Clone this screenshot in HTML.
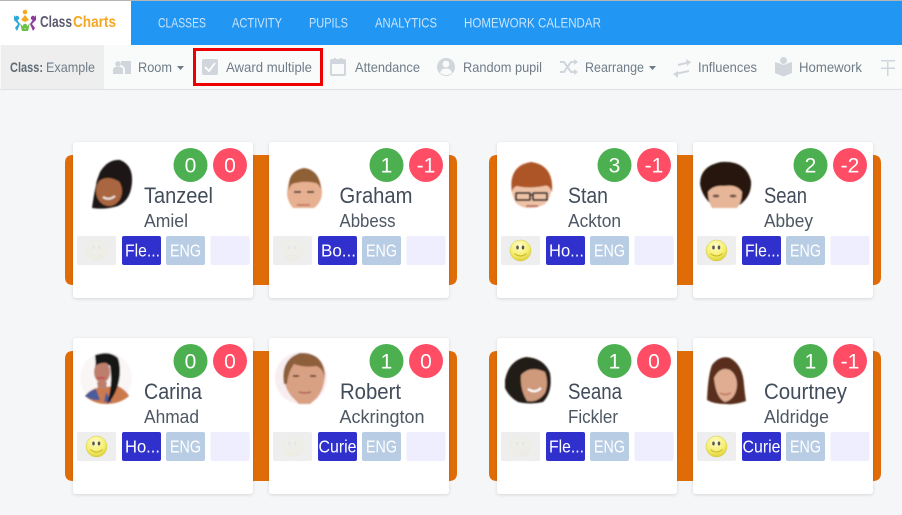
<!DOCTYPE html>
<html lang="en"><head><meta charset="utf-8"><title>Class Charts</title>
<style>
html,body{margin:0;padding:0;width:902px;height:515px;overflow:hidden;background:#f4f6f8}
svg{display:block}
text{font-family:"Liberation Sans",sans-serif}
.nav{font-size:14px;fill:#c9e4fb}
.tb{font-size:14px;fill:#6f7c87}
.nm{font-size:22.500px;fill:#424c5a}
.sn{font-size:18px;fill:#4d5763}
.bd{font-size:21px;fill:#fff;text-anchor:middle}
.ch{font-size:17.500px;fill:#fff}
.ic{fill:#d0d6db}
.ics{fill:none;stroke:#d0d6db;stroke-width:2}
</style></head><body>
<svg width="902" height="515" viewBox="0 0 902 515" xmlns="http://www.w3.org/2000/svg">
<defs>
<filter id="b" x="-10%" y="-10%" width="120%" height="120%"><feGaussianBlur stdDeviation=".9"/></filter>
<filter id="s" x="-10%" y="-10%" width="120%" height="120%"><feDropShadow dx="0" dy="1" stdDeviation="1.500" flood-color="#000" flood-opacity=".13"/></filter>
<radialGradient id="sm" cx=".45" cy=".3" r=".75"><stop offset="0" stop-color="#fffdd0"/><stop offset=".6" stop-color="#f6ee6c"/><stop offset="1" stop-color="#d8c92c"/></radialGradient>
<g id="smile"><circle cx="0" cy="0" r="10.500" fill="url(#sm)" stroke="#cfc85a" stroke-width=".5"/><ellipse cx="-3" cy="-3" rx="1.300" ry="2" fill="#555"/><ellipse cx="2.500" cy="-3" rx="1.300" ry="2" fill="#555"/><path d="M-6 3Q0 8 6 3" fill="none" stroke="#c5b52a" stroke-width="1"/></g>
<g id="base">
<rect width="180" height="156" rx="3" fill="#fff" filter="url(#s)"/>
<circle cx="117.500" cy="23" r="17" fill="#4caf50"/>
<circle cx="157" cy="23" r="17" fill="#ff4d65"/>
<rect x="4" y="94" width="39" height="29" rx="2" fill="#eeeeee"/>
<rect x="49" y="94" width="39" height="29" rx="2" fill="#3030cc"/>
<rect x="93" y="94" width="39" height="29" rx="2" fill="#b8cce4"/>
<rect x="137.500" y="94" width="39" height="29" rx="2" fill="#eeeeff"/>
<text class="ch" x="97" y="114.500" textLength="31" lengthAdjust="spacingAndGlyphs">ENG</text>
</g>
</defs>

<rect width="902" height="515" fill="#f4f6f8"/>
<!-- header -->
<rect width="902" height="45" fill="#fff"/>
<rect y="0" width="902" height="1" fill="#b5b5b5"/>
<rect x="131" y="1" width="771" height="44" fill="#2196f3"/>
<g>
<circle cx="25" cy="12" r="2.300" fill="#f5a623"/><path d="M25 15L21 20L25 22L29 20Z" fill="#f5a623"/>
<circle cx="17" cy="18" r="2.200" fill="#2fa8d8"/><path d="M14 15L20 24L17 31L15 28L18 24L14 20Z" fill="#2fa8d8"/>
<circle cx="33" cy="18" r="2.200" fill="#8d3c9e"/><path d="M36 15L30 24L33 31L35 28L32 24L36 20Z" fill="#8d3c9e"/>
<circle cx="25" cy="26" r="2.200" fill="#6cc04a"/><path d="M20 23L25 29L30 23L28 31H22Z" fill="#6cc04a"/>
</g>
<text x="40" y="27" font-size="16" font-weight="bold" fill="#5c5a6e" textLength="32" lengthAdjust="spacingAndGlyphs">Class</text>
<text x="73" y="27" font-size="16" font-weight="bold" fill="#f5a623" textLength="43" lengthAdjust="spacingAndGlyphs">Charts</text>
<text class="nav" x="158" y="27.500" textLength="48" lengthAdjust="spacingAndGlyphs">CLASSES</text>
<text class="nav" x="232" y="27.500" textLength="50" lengthAdjust="spacingAndGlyphs">ACTIVITY</text>
<text class="nav" x="309" y="27.500" textLength="39" lengthAdjust="spacingAndGlyphs">PUPILS</text>
<text class="nav" x="375" y="27.500" textLength="62" lengthAdjust="spacingAndGlyphs">ANALYTICS</text>
<text class="nav" x="464" y="27.500" textLength="137" lengthAdjust="spacingAndGlyphs">HOMEWORK CALENDAR</text>

<!-- toolbar -->
<rect y="45" width="902" height="44" fill="#f9fbfb"/>
<rect y="89" width="902" height="1" fill="#dfe2e5"/>
<rect x="1" y="45" width="103" height="44" fill="#eeeeee"/>
<text class="tb" x="10" y="72" font-weight="bold" style="fill:#5f6b75" textLength="33" lengthAdjust="spacingAndGlyphs">Class:</text>
<text class="tb" x="46" y="72" textLength="49" lengthAdjust="spacingAndGlyphs">Example</text>
<!-- room -->
<path class="ic" d="M113 74V70Q113 67 116 67H120Q123 67 123 70V74Z"/><circle class="ic" cx="118" cy="64" r="2.800"/><path class="ic" d="M121 61H131V74H125V70Q125 66 121 65Z"/>
<text class="tb" x="138" y="72" textLength="34" lengthAdjust="spacingAndGlyphs">Room</text>
<path d="M177 66H184L180.500 70Z" fill="#6f7c87"/>
<!-- checkbox -->
<rect class="ic" x="202" y="59" width="16" height="16" rx="2"/>
<path d="M205 67L209 71L215 63" fill="none" stroke="#fff" stroke-width="1.800"/>
<text class="tb" x="226" y="72" textLength="86" lengthAdjust="spacingAndGlyphs">Award multiple</text>
<rect x="194.500" y="49.500" width="127" height="35" fill="none" stroke="#ee0000" stroke-width="3"/>
<!-- calendar -->
<rect class="ics" x="331" y="60" width="14" height="15" rx="1"/><rect class="ic" x="331" y="60" width="14" height="4"/><rect class="ic" x="334" y="58" width="2" height="4"/><rect class="ic" x="340" y="58" width="2" height="4"/>
<text class="tb" x="355" y="72" textLength="65" lengthAdjust="spacingAndGlyphs">Attendance</text>
<!-- user -->
<circle class="ic" cx="446" cy="67" r="9"/><circle cx="446" cy="64" r="3.300" fill="#f9fbfb"/><path d="M440 73Q441 68.500 446 68.500Q451 68.500 452 73Q446 77 440 73Z" fill="#f9fbfb"/>
<text class="tb" x="463" y="72" textLength="79" lengthAdjust="spacingAndGlyphs">Random pupil</text>
<!-- shuffle -->
<path class="ics" d="M560 62H564L571 72H575M560 72H564L571 62H575"/><path class="ic" d="M574 59L578 62L574 65ZM574 69L578 72L574 75Z"/>
<text class="tb" x="585" y="72" textLength="59" lengthAdjust="spacingAndGlyphs">Rearrange</text>
<path d="M649 66H656L652.500 70Z" fill="#6f7c87"/>
<!-- exchange -->
<path class="ics" d="M678 65L690 62M689 71L675 74"/><path class="ic" d="M686 59L691 62L687 66ZM678 71L673 74L678 78Z"/>
<text class="tb" x="698" y="72" textLength="59" lengthAdjust="spacingAndGlyphs">Influences</text>
<!-- book -->
<path class="ic" d="M775 62L780 63.500Q783.500 66 787 63.500L792 62V73L783.500 76.500L775 73Z"/><circle class="ic" cx="783.500" cy="60.500" r="3.500"/>
<text class="tb" x="799" y="72" textLength="63" lengthAdjust="spacingAndGlyphs">Homework</text>
<!-- split -->
<rect class="ic" x="881" y="60" width="14" height="1.500"/><rect class="ic" x="881" y="67.500" width="14" height="1.500"/><rect class="ic" x="887" y="62" width="1.500" height="14"/>

<!-- orange tabs row 1 -->
<g fill="#e06c08">
<path d="M73 155V285H73Q65 285 65 277V163Q65 155 73 155Z"/><rect x="253" y="155" width="16" height="130"/><path d="M449 155Q457 155 457 163V277Q457 285 449 285Z"/>
<path d="M497 155V285Q489 285 489 277V163Q489 155 497 155Z"/><rect x="677" y="155" width="16" height="130"/><path d="M873 155Q881 155 881 163V277Q881 285 873 285Z"/>
</g>
<g fill="#e06c08" transform="translate(0,196)">
<path d="M73 155V285H73Q65 285 65 277V163Q65 155 73 155Z"/><rect x="253" y="155" width="16" height="130"/><path d="M449 155Q457 155 457 163V277Q457 285 449 285Z"/>
<path d="M497 155V285Q489 285 489 277V163Q489 155 497 155Z"/><rect x="677" y="155" width="16" height="130"/><path d="M873 155Q881 155 881 163V277Q881 285 873 285Z"/>
</g>

<!-- cards row 1 -->
<g transform="translate(73,142)"><use href="#base"/>
<text class="nm" x="71" y="61" textLength="69" lengthAdjust="spacingAndGlyphs">Tanzeel</text>
<text class="sn" x="71" y="85" textLength="44" lengthAdjust="spacingAndGlyphs">Amiel</text>
<text class="bd" x="117.500" y="30.500">0</text><text class="bd" x="157" y="30.500">0</text>
<text class="ch" x="52" y="114.500" textLength="35" lengthAdjust="spacingAndGlyphs">Fle...</text>
<use href="#smile" x="23.500" y="108.500" opacity=".05"/></g>
<g transform="translate(269,142)"><use href="#base"/>
<text class="nm" x="70.500" y="61" textLength="73" lengthAdjust="spacingAndGlyphs">Graham</text>
<text class="sn" x="70.500" y="85" textLength="56" lengthAdjust="spacingAndGlyphs">Abbess</text>
<text class="bd" x="117.500" y="30.500">1</text><text class="bd" x="157" y="30.500">-1</text>
<text class="ch" x="52" y="114.500" textLength="35" lengthAdjust="spacingAndGlyphs">Bo...</text>
<use href="#smile" x="23.500" y="108.500" opacity=".05"/></g>
<g transform="translate(497,142)"><use href="#base"/>
<text class="nm" x="71" y="61" textLength="40" lengthAdjust="spacingAndGlyphs">Stan</text>
<text class="sn" x="71" y="85" textLength="53" lengthAdjust="spacingAndGlyphs">Ackton</text>
<text class="bd" x="117.500" y="30.500">3</text><text class="bd" x="157" y="30.500">-1</text>
<text class="ch" x="52" y="114.500" textLength="35" lengthAdjust="spacingAndGlyphs">Ho...</text>
<use href="#smile" x="23.500" y="108.500"/></g>
<g transform="translate(693,142)"><use href="#base"/>
<text class="nm" x="71" y="61" textLength="43" lengthAdjust="spacingAndGlyphs">Sean</text>
<text class="sn" x="71" y="85" textLength="49" lengthAdjust="spacingAndGlyphs">Abbey</text>
<text class="bd" x="117.500" y="30.500">2</text><text class="bd" x="157" y="30.500">-2</text>
<text class="ch" x="52" y="114.500" textLength="35" lengthAdjust="spacingAndGlyphs">Fle...</text>
<use href="#smile" x="23.500" y="108.500"/></g>

<!-- cards row 2 -->
<g transform="translate(73,338)"><use href="#base"/>
<text class="nm" x="71" y="61" textLength="58" lengthAdjust="spacingAndGlyphs">Carina</text>
<text class="sn" x="71" y="85" textLength="55" lengthAdjust="spacingAndGlyphs">Ahmad</text>
<text class="bd" x="117.500" y="30.500">0</text><text class="bd" x="157" y="30.500">0</text>
<text class="ch" x="52" y="114.500" textLength="35" lengthAdjust="spacingAndGlyphs">Ho...</text>
<use href="#smile" x="23.500" y="108.500"/></g>
<g transform="translate(269,338)"><use href="#base"/>
<text class="nm" x="71" y="61" textLength="61" lengthAdjust="spacingAndGlyphs">Robert</text>
<text class="sn" x="70.500" y="85" textLength="85" lengthAdjust="spacingAndGlyphs">Ackrington</text>
<text class="bd" x="117.500" y="30.500">1</text><text class="bd" x="157" y="30.500">0</text>
<text class="ch" x="49.500" y="114.500" textLength="38" lengthAdjust="spacingAndGlyphs">Curie</text>
<use href="#smile" x="23.500" y="108.500" opacity=".05"/></g>
<g transform="translate(497,338)"><use href="#base"/>
<text class="nm" x="71" y="61" textLength="54" lengthAdjust="spacingAndGlyphs">Seana</text>
<text class="sn" x="71" y="85" textLength="50" lengthAdjust="spacingAndGlyphs">Fickler</text>
<text class="bd" x="117.500" y="30.500">1</text><text class="bd" x="157" y="30.500">0</text>
<text class="ch" x="52" y="114.500" textLength="35" lengthAdjust="spacingAndGlyphs">Fle...</text>
<use href="#smile" x="23.500" y="108.500" opacity=".05"/></g>
<g transform="translate(693,338)"><use href="#base"/>
<text class="nm" x="71" y="61" textLength="83" lengthAdjust="spacingAndGlyphs">Courtney</text>
<text class="sn" x="71" y="85" textLength="65" lengthAdjust="spacingAndGlyphs">Aldridge</text>
<text class="bd" x="117.500" y="30.500">1</text><text class="bd" x="157" y="30.500">-1</text>
<text class="ch" x="49.500" y="114.500" textLength="38" lengthAdjust="spacingAndGlyphs">Curie</text>
<use href="#smile" x="23.500" y="108.500"/></g>

<!-- faces -->
<g filter="url(#b)">
<!-- Tanzeel -->
<path d="M92 208Q95 185 100 172Q108 159 120 160Q133 165 132 182Q131 200 118 206Q105 210 92 208Z" fill="#1d1618"/>
<ellipse cx="109" cy="191" rx="13" ry="15" fill="#a9663f"/>
<path d="M96 184Q106 172 123 184L127 176Q124 165 115 165Q100 165 96 184Z" fill="#1d1618"/>
<path d="M103 197Q109 201 115 196" stroke="#f2e4dc" stroke-width="2" fill="none"/>
<!-- Graham -->
<path d="M293 208Q287 201 287 193Q288 172 304 169Q320 170 322 192Q322 202 314 208Z" fill="#e6b091"/>
<path d="M289 190Q287 171 304 168Q320 170 321 190Q319 184 316 183Q304 180 292 184Q290 186 289 190Z" fill="#8f5f36"/>
<rect x="294" y="191" width="7" height="2" fill="#5a4030"/><rect x="307" y="191" width="7" height="2" fill="#5a4030"/>
<path d="M297 205H310" stroke="#c66a5c" stroke-width="1.500"/>
<!-- Stan -->
<path d="M516 203Q511 195 511 184Q513 163 531 162Q550 164 552 186Q551 198 545 204Q538 208 530 208Q521 208 516 203Z" fill="#efc3a6"/>
<path d="M512 192Q508 166 531 162Q554 165 552 192Q549 184 544 186Q528 189 517 186Q513 187 512 192Z" fill="#ad5525"/>
<rect x="516" y="193" width="14" height="7" rx="1" fill="none" stroke="#2e2e2e" stroke-width="2"/><rect x="533" y="193" width="14" height="7" rx="1" fill="none" stroke="#2e2e2e" stroke-width="2"/><path d="M530 195H533" stroke="#2e2e2e" stroke-width="1.500"/>
<path d="M526 206H538" stroke="#a55" stroke-width="1.500"/>
<!-- Sean -->
<path d="M711 204Q702 196 700 184Q700 166 721 162Q746 160 751 181Q752 195 741 204Q733 208 725 208Q717 208 711 204Z" fill="#26160f"/>
<path d="M708 192Q713 185 724 186Q737 184 742 192Q742 202 737 208H712Q708 201 708 192Z" fill="#e7b698"/>
<ellipse cx="716" cy="196" rx="3.500" ry="1.500" fill="#6a5040"/><ellipse cx="733" cy="196" rx="3.500" ry="1.500" fill="#6a5040"/>
<!-- Carina -->
<circle cx="106" cy="378" r="26" fill="#faf6f6"/>
<path d="M85 396Q90 389 100 387L118 386Q126 390 129 396Q120 404 106 404Q94 404 85 396Z" fill="#cc7a4e"/>
<path d="M85 396Q90 390 96 389L100 400Q92 401 85 396ZM106 392L112 402H104Z" fill="#4b5b9a"/>
<path d="M95 355Q110 350 118 358Q122 370 118 385Q114 398 107 404Q113 385 110 366Q102 360 96 368Z" fill="#171214"/>
<ellipse cx="102" cy="372" rx="8" ry="11" fill="#bd7f6c"/>
<path d="M97 378H105" stroke="#c44d5a" stroke-width="2"/>
<path d="M97 382L98 389H106L107 382Z" fill="#bd7f6c"/>
<path d="M95 366Q98 354 112 356L110 364Q102 361 95 366Z" fill="#171214"/>
<!-- Robert -->
<circle cx="301" cy="378" r="26" fill="#f8eef0"/>
<path d="M293 398Q283 388 284 371Q287 354 304 353Q323 355 325 373Q325 388 317 398L310 404H299Z" fill="#d9a183"/>
<path d="M284 384Q280 360 300 353Q324 352 325 378Q323 368 316 366Q305 368 294 364Q288 372 287 384Z" fill="#8d5f3b"/>
<rect x="293" y="375" width="6" height="2" fill="#6a4a3a"/><rect x="310" y="375" width="6" height="2" fill="#6a4a3a"/>
<path d="M299 392Q305 394 311 392" stroke="#a86055" stroke-width="1.500" fill="none"/>
<!-- Seana -->
<path d="M505 380Q509 360 526 357Q544 358 550 373Q553 392 543 402Q530 405 518 402Q509 397 505 388Z" fill="#241a18"/>
<path d="M521 375Q530 365 545 372Q549 383 545 393Q538 403 527 401Q520 390 521 375Z" fill="#cf9a7c"/>
<path d="M528 389Q535 394 541 388" stroke="#fff" stroke-width="2" fill="none"/>
<!-- Courtney -->
<path d="M707 400Q708 375 712 365Q720 355 730 358Q743 365 744 385Q745 395 746 401Q735 405 725 404Q714 404 707 400Z" fill="#5a2d1c"/>
<path d="M714 378Q720 366 730 370Q737 375 737 385Q736 399 725 402Q716 398 714 378Z" fill="#e0ad92"/>
<path d="M720 393Q725 396 731 393" stroke="#b8705e" stroke-width="1.500" fill="none"/>
</g>
</svg>
</body></html>
